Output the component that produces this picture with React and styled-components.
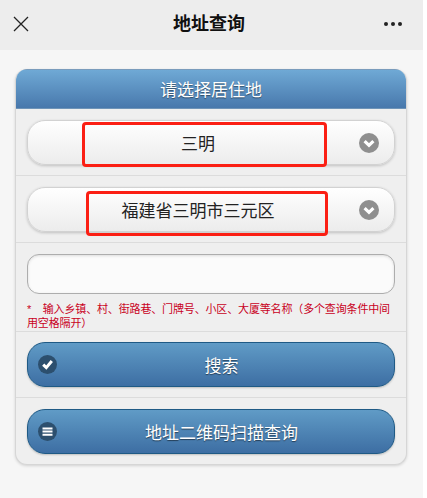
import React from "react";
import styled, { createGlobalStyle } from "styled-components";

const Global = createGlobalStyle`
  html, body { margin: 0; padding: 0; background: #fff; }
  body { font-family: "Liberation Sans", "Noto Sans CJK SC", sans-serif; }
`;
const Page = styled.div`
  width: 423px;
  height: 498px;
  background: #f6f6f6;
  overflow: hidden;
`;
const NavBar = styled.header`
  height: 50px;
  background: #ededed;
  display: flex;
  align-items: center;
  justify-content: space-between;
  padding: 0 20px 2px 13px;
  box-sizing: border-box;
  position: relative;
`;
const NavTitle = styled.h1`
  margin: 0;
  position: absolute;
  left: 0;
  width: 418px;
  text-align: center;
  font-size: 18px;
  font-weight: 700;
  color: #111;
  line-height: 48px;
  pointer-events: none;
`;
const Content = styled.main`
  padding: 19px 16px 0 15px;
`;
const Card = styled.section`
  border: 1px solid #d6d6d6;
  border-top: 0;
  border-radius: 12px;
  background: #efefef;
  box-shadow: 0 1px 3px rgba(0,0,0,.15);
  overflow: hidden;
`;
const CardHeader = styled.div`
  height: 40px;
  background: linear-gradient(#6fa9d5, #4878ac);
  border-top: 1px solid #7a9cbc;
  border-bottom: 1px solid #6f94b8;
  box-sizing: border-box;
  margin: 0 -1px;
  color: #fff;
  font-size: 17px;
  line-height: 41px;
  text-align: center;
  text-shadow: 0 1px 1px rgba(0,0,0,.45);
`;
const Row = styled.div`
  padding: ${p => p.$pad || "11px 11px 10px"};
  border-top: ${p => (p.$first ? "0" : "1px solid #dcdcdc")};
`;
const SelectWrap = styled.div`
  position: relative;
  height: 45px;
  border: 1px solid #d2d2d2;
  box-sizing: border-box;
  border-radius: 18px;
  background: linear-gradient(#ffffff, #ececec);
  box-shadow: 0 1px 3px rgba(0,0,0,.2);
  display: flex;
  align-items: center;
  justify-content: center;
  font-size: 17px;
  color: #222;
  padding-right: 26px;
`;
const Chevron = styled.span`
  position: absolute;
  right: 15px;
  top: 12px;
  width: 20px;
  height: 20px;
  display: flex;
`;
const Highlight = styled.span`
  position: absolute;
  top: ${p => p.$top}px;
  left: ${p => p.$left}px;
  width: ${p => p.$width}px;
  height: 45px;
  box-sizing: border-box;
  border: 3px solid #fb1f14;
  border-radius: 4px;
`;
const TextBox = styled.input`
  display: block;
  width: 100%;
  height: 40px;
  box-sizing: border-box;
  border: 1px solid #adadad;
  border-radius: 12px;
  background: #fbfbfb;
  box-shadow: inset 0 1px 3px rgba(0,0,0,.12);
  outline: none;
`;
const Hint = styled.p`
  margin: 9px 0 0;
  font-size: 11px;
  line-height: 13.5px;
  color: #c9001c;
  letter-spacing: -0.15px;
`;
const ActionButton = styled.button`
  position: relative;
  display: block;
  width: 100%;
  height: 45px;
  box-sizing: border-box;
  border: 1px solid #1f5a85;
  border-radius: 18px;
  background: linear-gradient(#609bc6, #3d6ea3);
  box-shadow: 0 1px 2px rgba(0,0,0,.2);
  color: #fff;
  font: inherit;
  font-size: 17px;
  text-shadow: 0 1px 1px rgba(0,0,0,.5);
  padding: 0 0 0 21px;
`;
const IconDisc = styled.span`
  position: absolute;
  left: 10px;
  top: 12px;
  width: 19px;
  height: 19px;
  display: flex;
`;

const ChevronIcon = () => (
  <svg width="20" height="20" viewBox="0 0 20 20">
    <circle cx="10" cy="10" r="10" fill="#8f8f8f" />
    <path d="M5.6 8.2 10 12.4 14.4 8.2" fill="none" stroke="#fff" strokeWidth="3.2" />
  </svg>
);
const CheckIcon = () => (
  <svg width="19" height="19" viewBox="0 0 19 19">
    <circle cx="9.5" cy="9.5" r="9.5" fill="#2c4f6e" />
    <path d="M5.2 9.6 8.3 12.6 13.8 6" fill="none" stroke="#fff" strokeWidth="3" />
  </svg>
);
const MenuIcon = () => (
  <svg width="19" height="19" viewBox="0 0 19 19">
    <circle cx="9.5" cy="9.5" r="9.5" fill="#2c4f6e" />
    <path d="M4.5 5.5h10v2h-10zM4.5 8.6h10v2h-10zM4.5 11.7h10v2h-10z" fill="#fff" />
  </svg>
);
const CloseIcon = () => (
  <svg width="16" height="16" viewBox="0 0 16 16">
    <path d="M1 1 15 15M15 1 1 15" stroke="#222" strokeWidth="1.3" fill="none" />
  </svg>
);
const MoreIcon = () => (
  <svg width="20" height="6" viewBox="0 0 20 6">
    <circle cx="3" cy="3" r="2" fill="#222" />
    <circle cx="10" cy="3" r="2" fill="#222" />
    <circle cx="17" cy="3" r="2" fill="#222" />
  </svg>
);

export default function App() {
  return (
    <Page>
      <Global />
      <NavBar>
        <CloseIcon />
        <NavTitle>地址查询</NavTitle>
        <MoreIcon />
      </NavBar>
      <Content>
        <Card>
          <CardHeader>请选择居住地</CardHeader>
          <Row $first>
            <SelectWrap>
              三明
              <Chevron><ChevronIcon /></Chevron>
              <Highlight $top={1} $left={54} $width={245} />
            </SelectWrap>
          </Row>
          <Row>
            <SelectWrap>
              福建省三明市三元区
              <Chevron><ChevronIcon /></Chevron>
              <Highlight $top={3} $left={58} $width={242} />
            </SelectWrap>
          </Row>
          <Row $pad="11px 11px 1px">
            <TextBox />
            <Hint>{"*\u00a0\u00a0\u00a0 输入乡镇、村、街路巷、门牌号、小区、大厦等名称（多个查询条件中间用空格隔开）"}</Hint>
          </Row>
          <Row $pad="10px 11px">
            <ActionButton>
              <IconDisc><CheckIcon /></IconDisc>
              搜索
            </ActionButton>
          </Row>
          <Row>
            <ActionButton>
              <IconDisc><MenuIcon /></IconDisc>
              地址二维码扫描查询
            </ActionButton>
          </Row>
        </Card>
      </Content>
    </Page>
  );
}
